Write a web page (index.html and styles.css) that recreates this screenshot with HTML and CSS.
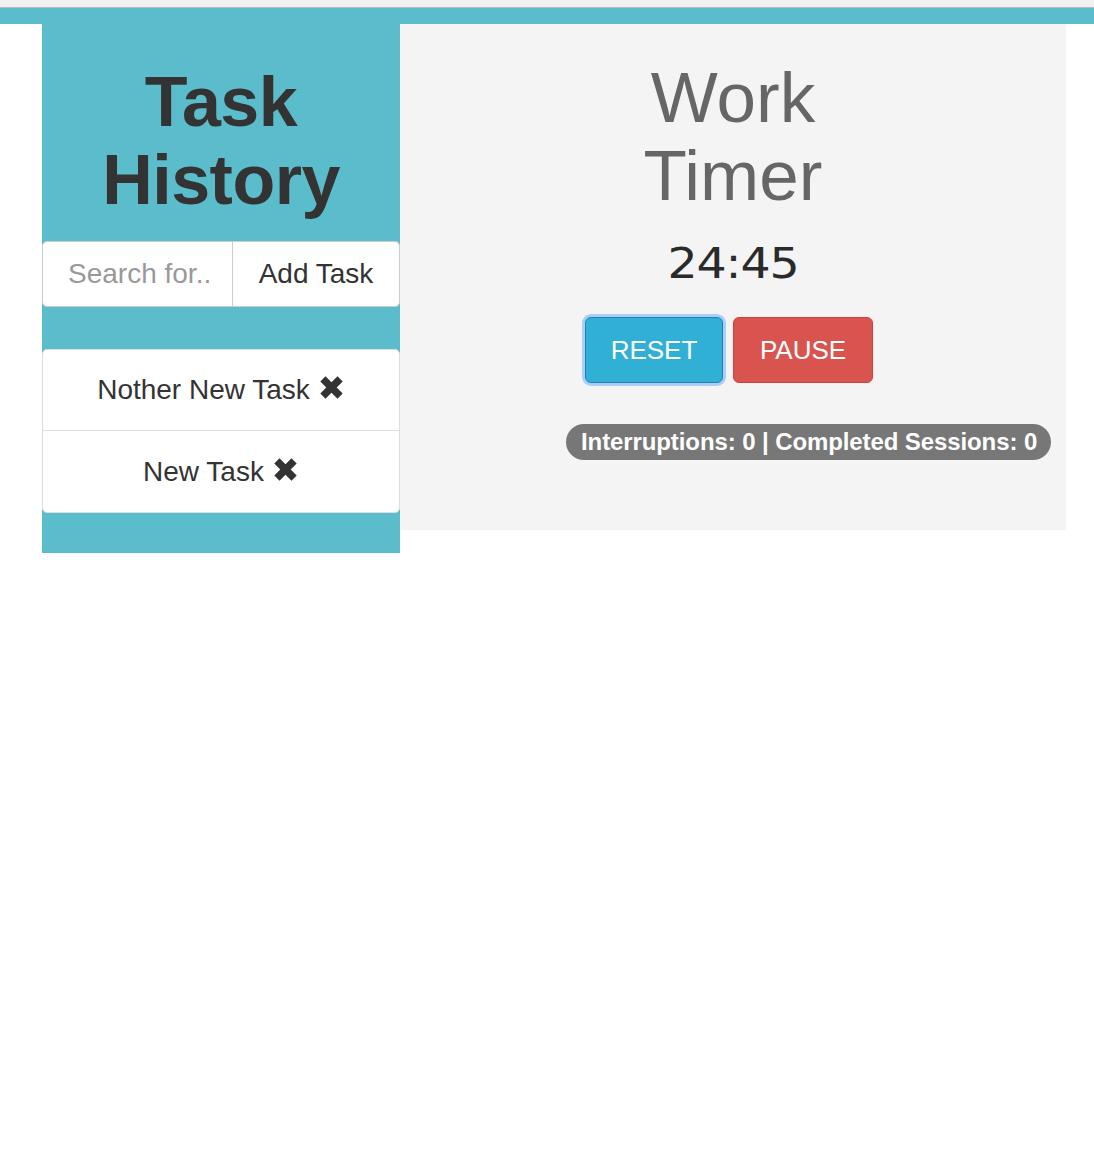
FILE: index.html
```html
<!DOCTYPE html>
<html>
<head>
<meta charset="utf-8">
<link rel="stylesheet" href="styles.css">
</head>
<body>
<div class="topbar"></div>
<div class="band"></div>
<div class="layout">
  <aside class="sidebar">
    <h1 class="side-title">Task History</h1>
    <div class="input-group">
      <input class="search" type="text" placeholder="Search for..">
      <button class="add-btn">Add Task</button>
    </div>
    <ul class="tasks">
      <li class="task">Nother New Task <svg class="x" viewBox="0 0 22 22"><path d="M4 4 L18 18 M18 4 L4 18"/></svg></li>
      <li class="task">New Task <svg class="x" viewBox="0 0 22 22"><path d="M4 4 L18 18 M18 4 L4 18"/></svg></li>
    </ul>
  </aside>
  <main class="panel">
    <h1 class="main-title">Work Timer</h1>
    <div class="clock"><span class="clock-text">24:45</span></div>
    <div class="buttons">
      <button class="btn btn-reset">RESET</button>
      <button class="btn btn-pause">PAUSE</button>
    </div>
    <div class="badge-row">
      <span class="badge">Interruptions: 0 | Completed Sessions: 0</span>
    </div>
  </main>
</div>
</body>
</html>
```

FILE: styles.css
```css
* { box-sizing: border-box; }
html, body { margin: 0; padding: 0; background: #fff; }
body { font-family: "Liberation Sans", Arial, sans-serif; color: #333; }

.topbar { height: 8px; background: #f1f1f1; border-bottom: 1px solid #b9b9b9; }
.band { height: 16px; background: #5bbdcc; }

.layout { display: flex; padding-left: 42px; align-items: flex-start; }

.sidebar {
  width: 358px;
  background: #5bbdcc;
  padding: 39px 0 40px;
}
.side-title {
  margin: 0 0 22px;
  font-size: 70px;
  line-height: 78px;
  font-weight: bold;
  text-align: center;
  color: #333;
  letter-spacing: -0.5px;
}
.input-group { display: flex; height: 66px; }
.search {
  width: 191px;
  height: 66px;
  border: 1px solid #ccc;
  border-radius: 5px 0 0 5px;
  padding: 0 6px 0 25px;
  font: 28px "Liberation Sans", Arial, sans-serif;
  color: #555;
  background: #fff;
  outline: none;
}
.search::placeholder { color: #999; }
.add-btn {
  flex: 1;
  height: 66px;
  border: 1px solid #ccc;
  border-left: none;
  border-radius: 0 5px 5px 0;
  background: #fff;
  font: 28px "Liberation Sans", Arial, sans-serif;
  color: #333;
  padding: 0;
}
.tasks { list-style: none; margin: 42px 0 0; padding: 0; }
.task {
  height: 82px;
  background: #fff;
  border: 1px solid #ddd;
  margin-bottom: -1px;
  display: flex;
  align-items: center;
  justify-content: center;
  font-size: 28px;
  color: #333;
}
.task:first-child { border-radius: 5px 5px 0 0; }
.task:last-child { border-radius: 0 0 5px 5px; margin-bottom: 0; height: 83px; }
.x { width: 27px; height: 27px; margin-left: 8px; margin-top: -5px; }
.x path { stroke: #333; stroke-width: 6; fill: none; }

.panel {
  width: 666px;
  background: #f4f4f4;
  padding: 35px 0 70px;
  text-align: center;
}
.main-title {
  margin: 0 auto;
  width: 300px;
  font-size: 71px;
  line-height: 78px;
  font-weight: normal;
  color: #666;
}
.clock {
  margin-top: 24px;
  font-family: "DejaVu Sans", sans-serif;
  font-weight: normal;
  font-size: 42px;
  line-height: 50px;
  height: 50px;
  color: #2a2a2a;
}
.clock-text { display: inline-block; transform: scaleX(1.13); letter-spacing: -1px; }
.buttons { display: flex; justify-content: center; gap: 10px; margin-top: 28px; padding-right: 8px; }
.btn {
  width: 140px;
  height: 66px;
  border-radius: 6px;
  font: 26px "Liberation Sans", Arial, sans-serif;
  color: #fff;
  padding: 0;
}
.btn-reset {
  background: #31b0d5;
  border: 1px solid #1f7fc0;
  width: 138px;
  box-shadow: 0 0 0 3px #a9cff5;
}
.btn-pause { background: #d9534f; border: 1px solid #d43f3a; }
.badge-row { display: flex; margin-top: 41px; padding-left: 166px; }
.badge {
  display: inline-block;
  height: 36px;
  line-height: 36px;
  padding: 0 14px 0 15px;
  border-radius: 18px;
  background: #777;
  color: #fff;
  font-weight: bold;
  font-size: 24px;
  letter-spacing: -0.1px;
  white-space: nowrap;
}
```
